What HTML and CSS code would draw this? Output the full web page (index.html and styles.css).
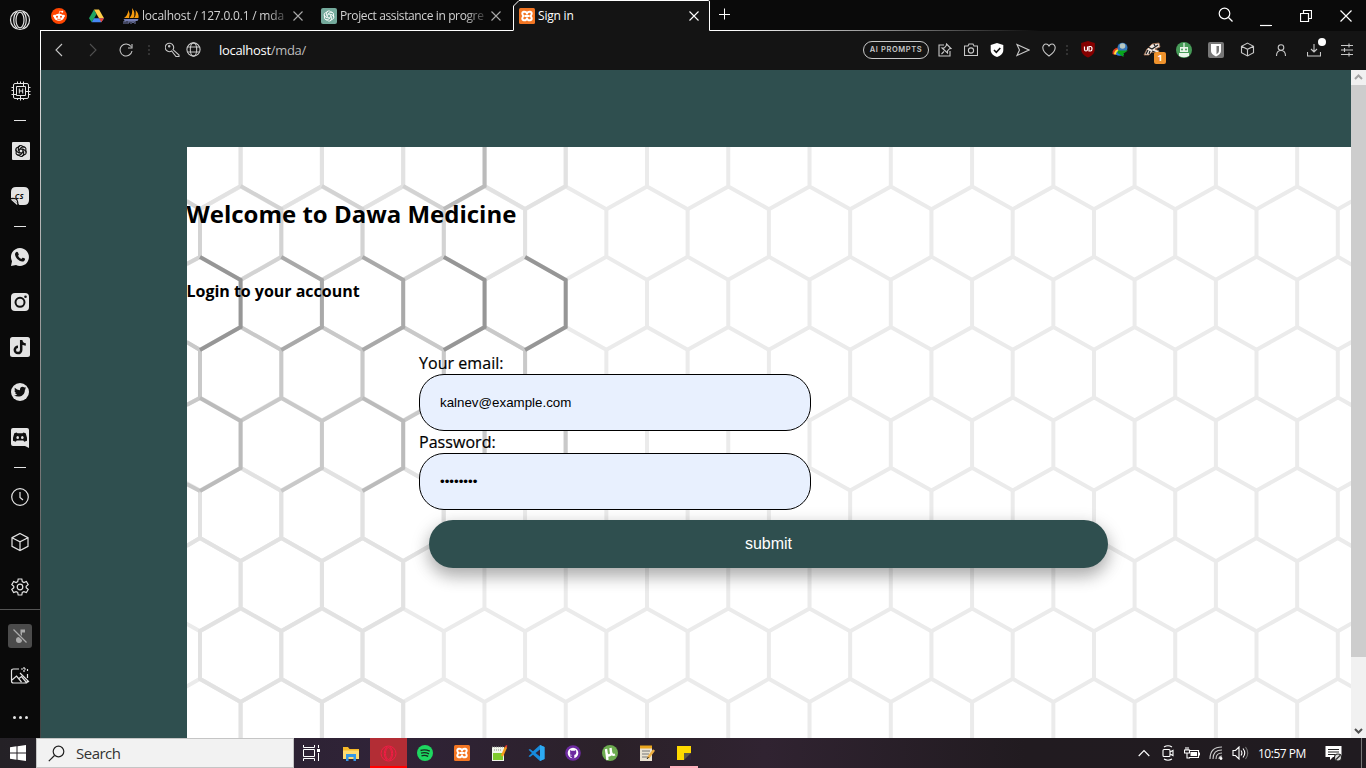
FILE: index.html
```html
<!DOCTYPE html>
<html lang="en">
<head>
<meta charset="utf-8">
<title>Sign in</title>
<link rel="stylesheet" href="styles.css">
</head>
<body>
<svg class="defs" width="0" height="0">
  <defs>
    <symbol id="x" viewBox="0 0 12 12"><path d="M1.500 1.500l9 9M10.500 1.500l-9 9"/></symbol>
    <symbol id="gpt" viewBox="0 0 16 16"><g fill="none"><path id="petal" d="M8 5.500L5 7.200V4.200A2.700 2.700 0 0 1 9.700 2.600L12.200 4"/><use href="#petal" transform="rotate(60 8 8)"/><use href="#petal" transform="rotate(120 8 8)"/><use href="#petal" transform="rotate(180 8 8)"/><use href="#petal" transform="rotate(240 8 8)"/><use href="#petal" transform="rotate(300 8 8)"/></g></symbol>
    <symbol id="xampp" viewBox="0 0 16 16"><rect width="16" height="16" rx="1.500" fill="#f37623"/><path d="M4.800 3.700Q8 3.500 8 6.500 8 3.500 11.200 3.700 14 4.500 11.700 8 14 11.500 11.200 12.300 8 12.500 8 9.500 8 12.500 4.800 12.300 2 11.500 4.300 8 2 4.500 4.800 3.700zM5.500 8h5" fill="none" stroke="#fff" stroke-width="2"/></symbol>
    <symbol id="cube" viewBox="0 0 20 20"><path d="M10 1.500l8 4.200v8.600l-8 4.200-8-4.200V5.700zM2 5.700l8 4.100 8-4.100M10 9.800v8.700"/></symbol>
    <path id="cell" d="M0 0V47.600L40.640 70.700V118L0 140.700M81.270 47.600L40.640 70.700M40.640 118L81.270 140.700"/>
    <g id="row">
      <use href="#cell" x="-81.270"/><use href="#cell"/><use href="#cell" x="81.270"/><use href="#cell" x="162.540"/><use href="#cell" x="243.810"/><use href="#cell" x="325.080"/><use href="#cell" x="406.350"/><use href="#cell" x="487.620"/><use href="#cell" x="568.890"/><use href="#cell" x="650.160"/><use href="#cell" x="731.430"/><use href="#cell" x="812.700"/><use href="#cell" x="893.970"/><use href="#cell" x="975.240"/><use href="#cell" x="1056.510"/><use href="#cell" x="1137.780"/>
    </g>
  </defs>
</svg>

<div class="screen">
  <div class="browser">
    <nav class="sidebar">
      <span class="slot logo"><svg width="22" height="22" viewBox="0 0 22 22"><circle cx="11" cy="11" r="9.500"/><ellipse cx="11" cy="11" rx="4" ry="7.800"/><path d="M8.500 2.500C3.500 6 3.500 16 8.500 19.500M13.500 2.500c5 3.500 5 13.500 0 17"/></svg></span>
      <span class="slot chip"><svg width="20" height="20" viewBox="0 0 20 20"><rect x="2.500" y="2.500" width="15" height="15" rx="1.500"/><path d="M5.500 5.500h9v9h-9zM8.300 7.500v5M11.700 7.500v5M8 10h4M6.500 .5v2M9.500 .5v2M12.500 .5v5M6.500 17v2M9.500 14.500v5M12.500 17v2M.5 6.500h2M.5 9.500h2M.5 13.500h5M17.500 6.500h2M14.500 10.500h5M17.500 13.500h2"/></svg></span>
      <span class="slot dash d1"><i></i></span>
      <span class="slot gpt"><svg width="18" height="18" viewBox="0 0 18 18"><rect width="18" height="18" rx="1" fill="#e4e4e4" stroke="none"/><use href="#gpt" x="2" y="2" width="14" height="14" stroke="#111" stroke-width="1.300"/></svg></span>
      <span class="slot cs"><svg width="20" height="20" viewBox="0 0 20 20" stroke="none"><path d="M6 1h8q5 0 5 5v8q0 5-5 5H9.500L1 12V6q0-5 5-5z" fill="#e4e4e4"/><path d="M1.500 13.200L7.500 18.500" stroke="#e4e4e4" stroke-width="1.500"/><path d="M1 12.500q5-.5 6 1.500t1 5" stroke="#111"/><text x="4.800" y="13" class="cs-text">CS</text></svg></span>
      <span class="slot dash d2"><i></i></span>
      <span class="slot"><svg width="20" height="20" viewBox="0 0 20 20" stroke="none"><path d="M10 1a9 9 0 1 1-4 17.100L1 19l1-4.800A9 9 0 0 1 10 1z" fill="#e4e4e4"/><path d="M6 5.200q1-.8 2 .2l.8 2q0 .7-.8 1.400 1.200 2.300 3.300 3.200l1.200-1.200q.8-.3 2.600 1-.2 2.800-2.800 2.800C8.500 14 5 10.500 5 7q.2-1.300 1-1.800z" fill="#111"/></svg></span>
      <span class="slot"><svg width="20" height="20" viewBox="0 0 20 20"><rect x="1" y="1" width="18" height="18" rx="4" fill="#e4e4e4" stroke="none"/><circle cx="10" cy="10.300" r="4.500" stroke="#111" stroke-width="2"/><circle cx="15.500" cy="4.700" r="1.300" fill="#111" stroke="none"/></svg></span>
      <span class="slot"><svg width="20" height="20" viewBox="0 0 20 20"><rect width="20" height="20" rx="2.500" fill="#e4e4e4" stroke="none"/><path d="M11.200 3v10a3.200 3.200 0 1 1-3.200-3.300M11.200 3.500c.5 2.500 2 3.900 4.600 4" stroke="#111" stroke-width="2.500"/></svg></span>
      <span class="slot"><svg width="20" height="20" viewBox="0 0 20 20" stroke="none"><circle cx="10" cy="10" r="9" fill="#e4e4e4"/><path d="M4.800 5.700q2 2.400 5.100 2.600c-.2-3.500 2.900-4.300 4.400-2.700l1.600-.6-1 1.600 1.200-.2-1.200 1.300C15 13.800 9 16.200 4 13.500q2.100 0 3.200-1-1.600-.4-2.100-1.600h1Q4.500 10.300 4.400 8.400l1 .2Q4 7.400 4.800 5.700z" fill="#111"/></svg></span>
      <span class="slot discord"><svg width="20" height="20" viewBox="0 0 20 20" stroke="none"><path d="M3 0h14q2 0 2 2v18l-4-2H3q-2 0-2-2V2q0-2 2-2z" fill="#e4e4e4"/><path d="M6.500 4.500l1 .8h5l1-.8 2.200.8L17 9.800v3l-2.700 1-1-1.300H6.700l-1 1.300-2.700-1v-3l1.300-4.500z" fill="#111"/><ellipse cx="7.700" cy="9.500" rx="1.300" ry="1.500" fill="#e4e4e4"/><ellipse cx="12.300" cy="9.500" rx="1.300" ry="1.500" fill="#e4e4e4"/></svg></span>
      <span class="slot dash d3"><i></i></span>
      <span class="slot outline"><svg width="20" height="20" viewBox="0 0 20 20"><circle cx="10" cy="10" r="8.300"/><path d="M10 5v5.500l3 2.500"/></svg></span>
      <span class="slot outline"><svg width="20" height="20"><use href="#cube"/></svg></span>
      <span class="slot outline"><svg width="20" height="20" viewBox="0 0 20 20"><path d="M8.200 2h3.600l.5 2.600 1.600.9 2.500-1 1.800 3.100-2 1.700v1.500l2 1.700-1.800 3.100-2.500-1-1.600.9-.5 2.500H8.200l-.5-2.500-1.600-.9-2.500 1-1.800-3.100 2-1.700V9.300l-2-1.700 1.800-3.100 2.500 1 1.600-.9z"/><circle cx="10" cy="10" r="2.800"/></svg></span>
      <span class="side-rule"></span>
      <span class="slot mute"><svg width="24" height="24" viewBox="0 0 24 24"><rect width="24" height="24" rx="3" fill="#4b4b4b" stroke="none"/><path d="M12.500 5.500H17v3h-3V16h-1.500z" fill="#aaa" stroke="none"/><circle cx="11" cy="16" r="3" fill="#aaa" stroke="none"/><path d="M5.500 5.500l13 13" stroke="#4b4b4b" stroke-width="3"/><path d="M5.500 5.500l13 13" stroke="#aaa"/></svg></span>
      <span class="slot picture"><svg width="20" height="18" viewBox="0 0 20 18"><path d="M9 2H3.500Q1.500 2 1.500 4v10q0 2 2 2h12q2 0 2-2M17.500 11V7M2 13l4.500-4 5 6M9 11.500l2.500-2 5 6M10 6l9 9"/><path d="M11 2h6M14 0v5M17.500 2v3" stroke-dasharray="2 1"/></svg></span>
      <span class="slot more"><i></i><i></i><i></i></span>
    </nav>

    <div class="main">
      <header class="tabs">
        <span class="pin"><svg width="16" height="16" viewBox="0 0 16 16"><circle cx="8" cy="8" r="8" fill="#ff4500"/><ellipse cx="8" cy="9.300" rx="5" ry="3.500" fill="#fff"/><circle cx="3.300" cy="8" r="1.200" fill="#fff"/><circle cx="12.700" cy="8" r="1.200" fill="#fff"/><circle cx="11.300" cy="3.700" r="1" fill="#fff"/><path d="M8 6l.7-2.800 2.400.5" stroke="#fff" stroke-width=".7" fill="none"/><circle cx="6" cy="8.700" r="1" fill="#ff4500"/><circle cx="10" cy="8.700" r="1" fill="#ff4500"/><path d="M6 11q2 1 4 0" stroke="#ff4500" stroke-width=".7" fill="none"/></svg></span>
        <span class="pin drive"><svg width="15" height="14" viewBox="0 0 15 14"><path d="M5 .5l2.500 4.800-4.800 8L0 9.300z" fill="#1da462"/><path d="M5 .5h5l5 8.800h-5z" fill="#ffcf48"/><path d="M5 9.300h10l-2.700 4H2.700z" fill="#4688f4"/><path d="M15 9.300l-2.700 4-2.300-4z" fill="#ea4335"/></svg></span>
        <div class="tab t1">
          <svg class="fav" width="16" height="16" viewBox="0 0 16 16"><path d="M1 10Q5 7 5.500 2q2 4 .5 8zM6.500 10Q10 6 9 0q4 5 1.500 10zM11 10q2.500-3 1.500-8 3.500 3 3 8z" fill="#f89c0e"/><path d="M.5 11h15l-1 2H2z" fill="#777fb3"/><path d="M1 16v-3h2v3m2-3v3m0-2h2v-1m1 3v-3h1l1 2 1-2h1v3" stroke="#777fb0" fill="none"/></svg>
          <span class="title">localhost / 127.0.0.1 / mda</span>
          <svg class="close" width="12" height="12"><use href="#x"/></svg>
        </div>
        <div class="tab t2">
          <svg class="fav" width="16" height="16"><rect width="16" height="16" rx="2" fill="#74aa9c"/><use href="#gpt" x="1.500" y="1.500" width="13" height="13" stroke="#fff" stroke-width="1"/></svg>
          <span class="title">Project assistance in progre</span>
          <svg class="close" width="12" height="12"><use href="#x"/></svg>
        </div>
        <div class="tab active">
          <svg class="tab-shape" width="198" height="31" viewBox="0 0 198 31"><path d="M0 31V30.500L.5 30V6L6 .5H195.500Q196.500.5 196.500 2V31z" fill="#141414"/><path d="M.5 30.500V6L6 .5H195.500Q196.500.5 196.500 2V30.500" fill="none" stroke="#fff"/></svg>
          <svg class="fav" width="16" height="16"><use href="#xampp"/></svg>
          <span class="title">Sign in</span>
          <svg class="close" width="12" height="12"><use href="#x"/></svg>
        </div>
        <svg class="plus" width="12" height="12" viewBox="0 0 12 12"><path d="M6.500 .5v11M1 6.500h11"/></svg>
        <div class="window-controls">
          <svg width="16" height="16" viewBox="0 0 16 16"><circle cx="7.500" cy="6.500" r="5.300"/><path d="M11.500 10.500l4 4"/></svg>
          <svg width="12" height="14" viewBox="0 0 12 14"><path d="M0 12.500h12"/></svg>
          <svg width="12" height="12" viewBox="0 0 12 12"><path d="M.5 3.500h8v8h-8zM3.500 3.500v-3h8v8h-3"/></svg>
          <svg width="12" height="12" viewBox="0 0 12 12"><path d="M.5 .5l11 11M11.500 .5l-11 11"/></svg>
        </div>
      </header>

      <div class="toolbar">
        <span class="b back"><svg width="14" height="14" viewBox="0 0 14 14"><path d="M9 1L3 7l6 6"/></svg></span>
        <span class="b fwd"><svg width="14" height="14" viewBox="0 0 14 14"><path d="M4 1l6 6-6 6"/></svg></span>
        <span class="b reload"><svg width="14" height="14" viewBox="0 0 14 14"><path d="M12 3.500A6 6 0 1 0 13 8M13 1v4H9"/></svg></span>
        <span class="dots"></span>
        <span class="b key"><svg width="15" height="15" viewBox="0 0 15 15"><path d="M8 7.700L14 13v1.500h-3L6.700 9A4.200 4.200 0 1 1 8 7.700z"/><circle cx="4.200" cy="4.200" r=".7"/></svg></span>
        <span class="b globe"><svg width="15" height="15" viewBox="0 0 15 15"><circle cx="7.500" cy="7.500" r="6.600"/><ellipse cx="7.500" cy="7.500" rx="3.200" ry="6.600"/><path d="M1.500 5h12M1.500 10h12"/></svg></span>
        <span class="url"><b>localhost</b>/mda/</span>
        <span class="prompts">AI PROMPTS</span>
        <span class="a"><svg width="14" height="14" viewBox="0 0 14 14"><path d="M6 2H1v11h11V8M8.500 1l4.500 4.500-1.500.2L9.500 8v2L4 5h2.200L8.300 2.500zM6 8.500L3.500 11"/></svg></span>
        <span class="a"><svg width="14" height="14" viewBox="0 0 14 14"><path d="M.5 3H4l1-2h4l1 2h3.500v9.500H.5z"/><circle cx="7" cy="7.500" r="2.600"/></svg></span>
        <span class="a"><svg width="14" height="14" viewBox="0 0 14 14"><path d="M7 0l6.300 2v5c0 3.500-3 6-6.300 7C3.700 13 .7 10.500.7 7V2z" fill="#fff" stroke="none"/><path d="M4 7l2.300 2.300L10.300 5" stroke="#111" stroke-width="1.600"/></svg></span>
        <span class="a"><svg width="14" height="14" viewBox="0 0 14 14"><path d="M1 1.500L13 7 1 12.500 3.500 7z"/></svg></span>
        <span class="a"><svg width="14" height="14" viewBox="0 0 14 14"><path d="M7 13C-2 7 .5 1 4 1q2 0 3 2 1-2 3-2c3.500 0 6 6-3 12z"/></svg></span>
        <span class="dots narrow"></span>
        <span class="e"><svg width="16" height="17" viewBox="0 0 16 17"><path d="M8 0l6.800 2v6c0 5-3.500 7-6.800 8.500C4.700 15 1.200 13 1.200 8V2z" fill="#850000" stroke="none"/><path d="M4.500 5.500v3q0 1.500 1.500 1.500t1.500-1.500v-3M9 5.500h1.500q1.500 0 1.500 2.200T10.500 10H9z" stroke="#fff" stroke-width="1.200"/></svg></span>
        <span class="e"><svg width="16" height="16" viewBox="0 0 16 16" stroke="none"><path d="M.5 12Q0 6 7 5.500V8Q3.500 9 3 13z" fill="#df3c20"/><path d="M2 12Q2.500 7.500 7 7v2Q4.500 10 4.500 13z" fill="#ffe339"/><path d="M4 12.500Q4 9 8 8.500l4 4Q7 15 4 12.500z" fill="#2c7be0"/><circle cx="10.500" cy="5.800" r="5" fill="#3275ba"/><circle cx="10.500" cy="4" r="2.800" fill="#b7c8c0"/><path d="M6 8.500h10l-4.500 3v3.500L5.500 11z" fill="#08a51b"/></svg></span>
        <span class="e badge-host"><svg width="18" height="16" viewBox="0 0 18 16"><path d="M1 13l3-6 5-5 7-1 1 4-5 2 4 2-1 3-6-2-3 3z" fill="#efe6df" stroke="#a66e4d" stroke-width=".8"/><path d="M3 12l2-4M7 9l-1 3M5 5l4 2 6-4M9 9l5 2M11 2l1 2" stroke="#222" stroke-width="1.300"/></svg><i class="badge">1</i></span>
        <span class="e"><svg width="16" height="16" viewBox="0 0 16 16"><circle cx="8" cy="8" r="8" fill="#479b58" stroke="none"/><path d="M8 1v4" stroke="#fff"/><path d="M4 5h8v5H4zM3 11h10v3q-5 2.500-10 0z" fill="#e9f4e9" stroke="none"/><circle cx="6" cy="7.500" r="1" fill="#479b58" stroke="none"/><circle cx="10" cy="7.500" r="1" fill="#479b58" stroke="none"/></svg></span>
        <span class="e"><svg width="16" height="16" viewBox="0 0 16 16" stroke="none"><rect width="16" height="16" rx="2" fill="#777"/><path d="M3 2h10v7q0 3-5 5.500Q3 12 3 9z" fill="#fff"/><path d="M8.500 4H11v5q0 2-2.500 3.300z" fill="#777"/></svg></span>
        <span class="e box"><svg width="15" height="15"><use href="#cube" stroke-width="1.500"/></svg></span>
        <span class="w"><svg width="12" height="14" viewBox="0 0 12 14"><circle cx="6" cy="4.500" r="2.800"/><path d="M1.500 13Q1.500 7.500 6 7.500t4.500 5.500"/></svg></span>
        <span class="w download"><svg width="14" height="14" viewBox="0 0 14 14"><path d="M7 1v8M4 6l3 3 3-3M.5 9v4h13V9"/></svg></span>
        <span class="w"><svg width="14" height="14" viewBox="0 0 14 14"><path d="M1 2.500h12M1 7h12M1 11.500h12M9 .5v4M4.500 5v4M9 9.500v4"/></svg></span>
      </div>

      <div class="viewport">
        <main class="page">
          <section class="panel">
            <svg class="hex" viewBox="187.400 147 1164 591" width="1164" height="591" fill="none">
              <g stroke="#ebebeb" stroke-width="4">
                <use href="#row" x="200.400" y="68.500"/><use href="#row" x="200.400" y="209.100"/><use href="#row" x="200.400" y="349.800"/><use href="#row" x="200.400" y="490.500"/><use href="#row" x="200.400" y="631.200"/>
              </g>
              <g stroke-width="4">
                <path stroke="#e2e2e2" d="M241 147V186L200.400 209M322.300 147V186L281.700 209M403.600 147V186L362.900 209M566.100 147V186L525.500 209V257L485 280M485 186L525.500 209M241 468L281.700 491V538L241 561L200.400 538V491M281.700 538L322.300 561L362.900 538V491L322.300 468M362.900 538L403.600 561L444 538V491L403.600 468M187 546L200.400 538M241 561V608L200.400 631V679L241 702V749M322.300 561V608L281.700 631V679L322.300 702V749M403.600 561V608L362.900 631V679L403.600 702V749M241 608L281.700 631M322.300 608L362.900 631M281.700 679L241 702M362.900 679L322.300 702"/>
                <path stroke="#d3d3d3" d="M187 201L200.400 209V257L187 264M241 186L281.700 209V257L241 280M322.300 186L362.900 209V257L322.300 280M403.600 186L444.200 209V257L403.600 280"/>
                <path stroke="#c9c9c9" d="M187 342L200.400 350V398L187 405M241 327L281.700 350V398L241 421M281.700 398L322.300 421V468L281.700 491M322.300 327L362.900 350V398L322.300 421M403.600 327L444.200 350V398L403.600 421M485 327L525.500 350V398M485 421V468M566 421V468M187 484L200.400 491"/>
                <path stroke="#bbb" d="M485 147V186L444.200 209M200.400 398L241 421V468L200.400 491M362.900 398L403.600 421V468L362.900 491"/>
                <path stroke="#a9a9a9" d="M281.700 257L322.300 280V327L281.700 350M362.900 257L403.600 280V327L362.900 350"/>
                <path stroke="#969696" d="M200.400 257L241 280V327L200.400 350M444.200 257L485 280V327L444.200 350M525.500 257L566.100 280V327L525.500 350"/>
              </g>
            </svg>
            <div class="content">
              <h2>Welcome to Dawa Medicine</h2>
              <h4>Login to your account</h4>
              <form class="login">
                <label for="email">Your email:</label>
                <input id="email" type="text" value="kalnev@example.com">
                <label for="password">Password:</label>
                <input id="password" type="password" value="password">
                <button type="button">submit</button>
              </form>
            </div>
          </section>
        </main>
        <aside class="scrollbar">
          <svg width="15" height="15" viewBox="0 0 15 15"><path d="M4 9l3.500-3.500L11 9" stroke="#a3a3a3" stroke-width="2"/></svg>
          <span class="thumb"></span>
          <svg width="15" height="15" viewBox="0 0 15 15"><path d="M4 6l3.500 3.500L11 6" stroke="#505050" stroke-width="2"/></svg>
        </aside>
      </div>
    </div>
  </div>

  <footer class="taskbar">
    <span class="start"><svg width="16" height="16" viewBox="0 0 16 16"><path d="M0 2.300L6.500 1.300V7.500H0zM7.500 1.200L16 0V7.500H7.500zM0 8.500H6.500V14.700L0 13.700zM7.500 8.500H16V16L7.500 14.800z" fill="#fff"/></svg></span>
    <div class="search"><svg width="17" height="17" viewBox="0 0 17 17"><circle cx="10.500" cy="6.500" r="5.300"/><path d="M6.500 10.500L.8 16.200"/></svg><span>Search</span></div>
    <span class="app taskview"><svg width="17" height="16" viewBox="0 0 17 16" stroke="#fff"><path d="M.5 0v2.500h11V0M.5 4.500h11v7H.5zM.5 16v-2.500h11V16M15.500 0v3M15.500 8v8"/><rect x="14" y="4" width="3" height="3" fill="#fff" stroke="none"/></svg></span>
    <span class="app explorer"><svg width="16" height="15" viewBox="0 0 16 15"><path d="M0 1h5l1.500 2H16v10H0z" fill="#f7b928"/><path d="M0 4.500h16V13H0z" fill="#ffdb70"/><path d="M3 15V8h10v7h-2.500v-4h-5v4z" fill="#3597e5"/></svg></span>
    <span class="app opera"><svg width="17" height="17" viewBox="0 0 17 17" stroke="#f51b45"><circle cx="8.500" cy="8.500" r="7.500"/><ellipse cx="8.500" cy="8.500" rx="3" ry="6"/><path d="M6.500 2Q2 8.500 6.500 15M10.500 2q4.500 6.500 0 13"/></svg></span>
    <span class="app"><svg width="16" height="16" viewBox="0 0 16 16"><circle cx="8" cy="8" r="8" fill="#1ed760"/><path d="M3.500 5.500Q8 4 12.800 6.200M4 8.200q4-1.300 8 .6M4.500 10.800q3.300-1 6.700.6" stroke="#172b20" stroke-width="1.400"/></svg></span>
    <span class="app"><svg width="16" height="16"><use href="#xampp"/></svg></span>
    <span class="app"><svg width="17" height="17" viewBox="0 0 17 17"><path d="M1 2h12v14H1z" fill="#f0f5ea"/><path d="M2 8h10v7H2z" fill="#7ec92d"/><path d="M1 2h12M3 5h8" stroke="#888" stroke-dasharray="1 1"/><path d="M15 2l-4 9" stroke="#f49c1b" stroke-width="2.500"/><path d="M14.500 1l1.500.7" stroke="#e33" stroke-width="2"/></svg></span>
    <span class="app"><svg width="17" height="16" viewBox="0 0 17 16"><path d="M12 0l4.500 2v12L12 16 5 9.800 2 12 .5 11.200 4 8 .5 4.800 2 4l3 2.200z" fill="#178bdd"/><path d="M12 4.500v7L7.500 8z" fill="#30243a"/><path d="M12 0l4.500 2v12L12 16z" fill="#2daaf2"/></svg></span>
    <span class="app"><svg width="16" height="16" viewBox="0 0 16 16"><circle cx="8" cy="8" r="7.800" fill="#6d2ba0"/><circle cx="8" cy="8" r="5.300" fill="#fff"/><path d="M5 5l1.300.8h3.400L11 5l.3 2.700q0 2-2 2.300v3.500H6.700V12H5.500M6.700 11v-1q-2-.3-2-2.300z" fill="#6d2ba0"/></svg></span>
    <span class="app"><svg width="16" height="16" viewBox="0 0 16 16"><circle cx="8" cy="8" r="8" fill="#6dac50"/><path d="M5.500 15L4 4M4.800 9q1 2 3 1.200T9 7L8.500 3M9 7q.7 3.800 4 2.500" stroke="#fff" stroke-width="2.400"/></svg></span>
    <span class="app"><svg width="17" height="17" viewBox="0 0 17 17"><path d="M1 2h12v14H1z" fill="#e9e2d1"/><path d="M1 2h12" stroke="#e9a51d" stroke-width="3"/><path d="M3 6h8M3 9h7M3 12h6" stroke="#777"/><path d="M15 5l-6 8" stroke="#edae42" stroke-width="2.500"/><path d="M9.500 12l-1.500 2" stroke="#222"/></svg></span>
    <span class="app notes"><svg width="14" height="14" viewBox="0 0 14 14"><path d="M0 0h14v14H0z" fill="#ffd900"/><path d="M7 7h7v7H7z" fill="#30243a"/><path d="M7 7h7l-7 7z" fill="#5d5748"/></svg></span>
    <div class="tray">
      <span class="t"><svg width="12" height="8" viewBox="0 0 12 8"><path d="M.7 7L6 1.500 11.300 7"/></svg></span>
      <span class="t"><svg width="14" height="16" viewBox="0 0 14 16"><rect x="2" y="4.500" width="7" height="7" rx="1"/><path d="M9 7l3-1.500v5L9 9M3 2q4-2.500 8 0M3 14q4 2.500 8 0"/></svg></span>
      <span class="t"><svg width="16" height="13" viewBox="0 0 16 13"><path d="M5 3.500h9.500v7H5M2 0v3M4 0v3M.5 3h5v3h-5zM3 6v5h3"/><path d="M6.500 5H13v4H6.500zM15 5.500h1v3h-1z" fill="#fff" stroke="none"/></svg></span>
      <span class="t"><svg width="14" height="14" viewBox="0 0 14 14"><path d="M1 13Q1 1 13 1M4 13q0-9 9-9M7 13q0-6 6-6M10 13q0-3 3-3" stroke="#ccc"/><circle cx="12" cy="12.500" r="1.400" fill="#fff" stroke="none"/></svg></span>
      <span class="t"><svg width="17" height="14" viewBox="0 0 17 14"><path d="M1 4.500h2.500L7 1v12L3.500 9.500H1zM9 4.500q1.800 2.500 0 5M11 2.500q3.500 4.500 0 9"/><path d="M13.500 1q4.500 6 0 12" stroke="#777"/></svg></span>
      <span class="clock">10:57 PM</span>
      <span class="notice"><svg width="17" height="17" viewBox="0 0 17 17"><path d="M.5 1h16v11H8l-3 3v-3H.5z" fill="#fff" stroke="none"/><path d="M3 4.500h11M3 7h11M3 9.500h7" stroke="#222"/><circle cx="13" cy="12.500" r="3.500" fill="#ddd" stroke="#222"/><path d="M11 14.500l4-4" stroke="#222"/></svg></span>
    </div>
  </footer>
</div>
</body>
</html>
```
FILE: styles.css
```css
* { box-sizing: border-box; }
body { margin: 0; background: #0a0a0a; font-family: "Open Sans", "Noto Sans", sans-serif; overflow: hidden; }
svg { display: block; flex: none; }
.defs { position: absolute; }
.screen { display: flex; flex-direction: column; width: 1366px; height: 768px; }
.browser { display: flex; height: 738px; }

.sidebar { width: 40px; height: 738px; display: flex; flex-direction: column; align-items: center; fill: none; stroke: #e4e4e4; stroke-width: 1.2; }
.slot { display: flex; align-items: center; justify-content: center; width: 40px; height: 45px; flex: none; }
.logo { height: 40px; margin-bottom: 28px; }
.chip { height: 46px; padding-left: 2px; }
.chip svg { stroke-width: 1; }
.dash i { width: 12px; height: 1px; background: #e4e4e4; }
.d1 { height: 13px; margin-bottom: 1px; }
.gpt { height: 46px; padding-left: 2px; }
.cs { height: 44px; }
.cs-text { font: italic bold 7.5px "Open Sans", sans-serif; fill: #111; }
.d2 { height: 16px; margin-bottom: 0.5px; }
.d3 { height: 15px; }
.discord { padding-top: 2px; }
.outline { padding-right: 1px; }
.side-rule { width: 40px; height: 1px; margin-top: -1px; background: #555; flex: none; }
.mute { height: 48px; margin-top: 2.5px; }
.picture { height: 32px; }
.more { height: 40px; margin-top: 5.5px; gap: 3px; }
.more i { width: 3px; height: 3px; border-radius: 50%; background: #e4e4e4; }

.main { width: 1326px; display: flex; flex-direction: column; }
.tabs { height: 31px; display: flex; align-items: center; background: linear-gradient(90deg, #fff 0 690px, #888 850px, transparent 1000px) 0 30px / 100% 1px no-repeat #0a0a0a; }
.pin { width: 38px; display: flex; justify-content: center; }
.drive { padding-right: 1px; }
.tab { position: relative; display: flex; align-items: center; height: 31px; font-size: 12px; color: #d2d2d2; }
.tab .title { margin-left: 3px; white-space: nowrap; overflow: hidden; }
.t1 { width: 198px; padding-left: 7px; }
.t2 { width: 199px; padding-left: 7px; }
.t1 .title, .t2 .title { width: 144px; -webkit-mask-image: linear-gradient(90deg, #000 125px, transparent 150px); }
.t1 .title { letter-spacing: -0.2px; }
.t2 .title { letter-spacing: -0.38px; }
.close { fill: none; stroke: #aaa; stroke-width: 1.1; margin-left: 6px; }
.active { width: 198px; padding-left: 6px; color: #fff; }
.active > * { z-index: 1; }
.tab-shape { position: absolute; left: 0; top: 0; }
.active .tab-shape { z-index: 0; }
.active .title { width: 130px; letter-spacing: -0.2px; }
.active .close { margin-left: 20px; stroke: #fff; }
.plus { fill: none; stroke: #fff; margin-left: 7px; margin-bottom: 4px; }
.window-controls { display: flex; align-items: center; margin-left: auto; padding-right: 14px; gap: 28px; fill: none; stroke: #fff; stroke-width: 1.2; }
.window-controls svg:first-child { margin-bottom: 2px; }
.window-controls svg:nth-child(2) { margin-left: -1px; margin-top: 8px; }

.toolbar { height: 39px; display: flex; align-items: center; padding: 0 3px 2px 7px; background: #141414; border-left: 1px solid #fff; fill: none; stroke: #c8c8c8; stroke-width: 1.1; }
.b { display: flex; justify-content: center; align-items: center; width: 34px; }
.back { width: 23px; margin-right: 10px; }
.fwd { width: 23px; stroke: #505050; margin-right: 10px; }
.reload { width: 24px; }
.dots { width: 22px; height: 10px; background: radial-gradient(circle, #333 1px, transparent 1.2px) center / 22px 4px; }
.key { width: 25px; }
.globe { width: 17px; }
.url { margin-left: 17px; font-size: 13px; letter-spacing: -0.3px; color: #bdbdbd; }
.url b { color: #fff; font-weight: 400; }
.prompts { margin-left: auto; margin-right: 3px; width: 66px; height: 18px; border: 1px solid #c8c8c8; border-radius: 9px; color: #c8c8c8; font: 600 7.5px/16px Inter, sans-serif; letter-spacing: 0.6px; text-align: center; white-space: nowrap; }
.a, .e, .w { display: flex; justify-content: center; align-items: center; width: 26px; flex: none; position: relative; }
.e { width: 32px; }
.box { padding-right: 1px; }
.w { width: 33px; }
.narrow { width: 10px; background-size: 10px 4px; }
.badge { position: absolute; left: 18px; top: 10px; width: 12px; height: 12px; border-radius: 2px; background: #ef922c; color: #fff; font: bold 9px/12px "Open Sans", sans-serif; text-align: center; }
.badge-host { height: 16px; }
.download::after { content: ""; position: absolute; right: 4px; top: -5px; width: 8px; height: 8px; border-radius: 50%; background: #fff; }

.viewport { height: 668px; display: flex; border-left: 1px solid; border-image: linear-gradient(#ddd, #444 90%) 1; }
.page { width: 1310px; height: 668px; background: #2f4f4f; padding: 77px 0 0 146px; }
.panel { position: relative; width: 1164px; height: 591px; background: #fff; overflow: hidden; }
.hex { position: absolute; inset: 0; }
.content { position: relative; padding-top: 50px; color: #000; }
h2 { margin: 0 0 0 -0.5px; font-size: 24px; line-height: 33px; font-weight: 700; }
h4 { margin: 50px 0 50px -0.5px; font-size: 16px; line-height: 22px; font-weight: 700; letter-spacing: -0.02px; }
.login { margin-left: 232px; width: 699px; display: flex; flex-direction: column; align-items: flex-start; }
.login label { font-size: 16px; line-height: 22px; letter-spacing: 0.05px; -webkit-text-stroke: 0.2px #000; }
.login input { width: 392px; height: 57px; margin: 0; padding: 0 20px; border: 1px solid #000; border-radius: 25px; background: #e8f0fe; color: #000; font: 13.333px "Liberation Sans", sans-serif; outline: 0; }
.login button { width: 679px; height: 48px; margin: 10px; border: 0; border-radius: 25px; background: #2f4f4f; color: #fff; font: 16px "Liberation Sans", sans-serif; box-shadow: 0 8px 16px rgba(0, 0, 0, 0.2), 0 6px 20px rgba(0, 0, 0, 0.19); }
.scrollbar { width: 15px; display: flex; flex-direction: column; background: #f1f1f1; fill: none; }
.thumb { height: 572px; background: #cdcdcd; margin-bottom: auto; }

.taskbar { height: 30px; display: flex; background: linear-gradient(90deg, #242126, #302338 28%, #2b2129 45%, #302331 56%, #211b20 75%, #201b20); fill: none; }
.start { width: 36px; display: flex; align-items: center; justify-content: center; }
.search { width: 258px; height: 30px; display: flex; align-items: center; gap: 11px; padding-left: 11px; background: #f2f2f2; border: 1px solid #c5c5c5; font-size: 15px; letter-spacing: -0.5px; color: #333; stroke: #222; stroke-width: 1.2; }
.app { width: 37px; display: flex; align-items: center; justify-content: center; padding-right: 1px; }
.taskview { width: 35px; padding: 0; }
.explorer { width: 41px; padding: 0 0 0 2px; }
.opera { background: #b32d35; border-bottom: 2px solid #f00; padding-top: 2px; }
.notes { position: relative; }
.notes::after { content: ""; position: absolute; left: 4px; bottom: 0; width: 28px; height: 2px; background: #ffb0bd; }
.tray { margin-left: auto; display: flex; align-items: center; padding-right: 4px; stroke: #fff; stroke-width: 1.1; }
.t { width: 24px; display: flex; justify-content: center; }
.clock { width: 60px; margin-left: 6px; font-size: 12px; letter-spacing: -0.5px; color: #fff; white-space: nowrap; }
.notice { width: 44px; height: 30px; display: flex; align-items: center; padding-left: 7px; border-right: 1px solid #777; }
```
